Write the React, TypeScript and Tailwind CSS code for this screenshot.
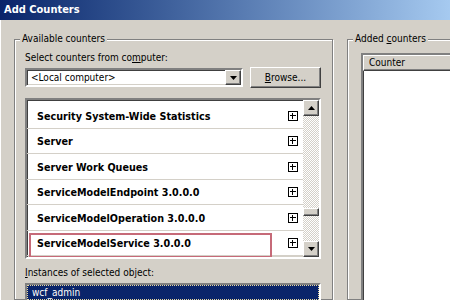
import React from "react";

const rows = [
  { name: "Security System-Wide Statistics", h: "h-[26px]" },
  { name: "Server", h: "h-[25px]" },
  { name: "Server Work Queues", h: "h-[26px]" },
  { name: "ServiceModelEndpoint 3.0.0.0", h: "h-[25px]" },
  { name: "ServiceModelOperation 3.0.0.0", h: "h-[26px]" },
  { name: "ServiceModelService 3.0.0.0", h: "h-[25px]", marked: true },
];

const sunken =
  "border-2 border-t-[#808080] border-l-[#808080] border-b-white border-r-white shadow-[inset_1px_1px_0_#404040,inset_-1px_-1px_0_#d4d0c8]";
const raised =
  "border border-t-[#ffffff] border-l-[#ffffff] border-b-[#404040] border-r-[#404040] shadow-[inset_-1px_-1px_0_#808080]";
const etched =
  "border border-[#808080] shadow-[inset_1px_1px_0_#fff,1px_1px_0_#fff]";

function PlusBox() {
  return (
    <svg width="10" height="10" viewBox="0 0 10 10" className="shrink-0">
      <rect x="0.5" y="0.5" width="9" height="9" fill="#fff" stroke="#000" />
      <path d="M2 4.5h6M4.5 2v6" stroke="#000" />
    </svg>
  );
}

function Arrow({ up }: { up?: boolean }) {
  return (
    <svg width="7" height="4" viewBox="0 0 7 4">
      <path d={up ? "M3.5 0L7 4H0z" : "M0 0h7L3.5 4z"} fill="#000" />
    </svg>
  );
}

export default function App() {
  return (
    <div className="w-[450px] h-[300px] overflow-hidden bg-[#d4d0c8] text-black font-['DejaVu_Sans_Condensed','DejaVu_Sans',sans-serif] text-[10px] leading-[12px]">
      <div className="h-[20px] flex items-center pl-[4px] bg-gradient-to-r from-[#0a246a] to-[#a6caf0] text-white font-bold text-[11px]">
        Add Counters
      </div>

      <div className="flex pt-[13px] pl-[13px] border-l border-white h-[280px]">
        {/* Available counters */}
        <fieldset className={`w-[319px] shrink-0 ${etched}`}>
          <legend className="ml-[5px] px-[2px] bg-[#d4d0c8]">Available counters</legend>
          <div className="pl-[10px]">
            <div className="mt-[7px]">
              Select counters from co<span className="underline">m</span>puter:
            </div>
            <div className="flex items-start mt-[3px]">
              <div className={`mt-[1px] w-[218px] h-[19px] bg-white flex items-center ${sunken}`}>
                <span className="pl-[4px] flex-1">&lt;Local computer&gt;</span>
                <div className={`w-[16px] h-full bg-[#d4d0c8] flex items-center justify-center ${raised}`}>
                  <Arrow />
                </div>
              </div>
              <button className={`ml-[7px] w-[71px] h-[21px] bg-[#d4d0c8] ${raised}`}>
                <span className="underline">B</span>rowse...
              </button>
            </div>

            <div className={`mt-[10px] w-[296px] h-[161px] bg-white flex ${sunken}`}>
              <div className="flex-1 pt-[3px] overflow-hidden">
                {rows.map((r) => (
                  <div
                    key={r.name}
                    className={`relative ${r.h} flex items-center justify-between pl-[10px] pr-[5px] border-b border-[#d4d0c8] font-bold text-[10.7px]`}
                  >
                    <span className="pt-[2px]">{r.name}</span>
                    <PlusBox />
                    {r.marked && (
                      <div className="absolute left-[2px] top-[2px] w-[243px] h-[25px] border-2 border-[#c66a78]" />
                    )}
                  </div>
                ))}
              </div>
              <div className="w-[16px] flex flex-col">
                <div className={`h-[16px] bg-[#d4d0c8] flex items-center justify-center ${raised}`}>
                  <Arrow up />
                </div>
                <div className="flex-1 bg-[repeating-conic-gradient(#ffffff_0%_25%,#d4d0c8_0%_50%)] bg-size-[2px_2px]">
                  <div className={`mt-[92px] h-[8px] bg-[#d4d0c8] ${raised}`} />
                </div>
                <div className={`h-[16px] bg-[#d4d0c8] flex items-center justify-center ${raised}`}>
                  <Arrow />
                </div>
              </div>
            </div>

            <div className="mt-[8px]">
              <span className="underline">I</span>nstances of selected object:
            </div>
            <div className={`mt-[4px] w-[296px] h-[40px] bg-white ${sunken}`}>
              <div className="h-[15px] bg-[#0a246a] text-white flex items-center pl-[4px] border border-dotted border-[#e8d8a0]">
                wcf_admin
              </div>
            </div>
          </div>
        </fieldset>

        {/* Added counters */}
        <fieldset className={`ml-[14px] w-[200px] shrink-0 ${etched}`}>
          <legend className="ml-[5px] px-[2px] bg-[#d4d0c8]">
            Added <span className="underline">c</span>ounters
          </legend>
          <div className="pl-[13px] mt-[8px]">
            <div className={`h-[250px] bg-white ${sunken}`}>
              <div className={`h-[16px] bg-[#d4d0c8] flex items-center pl-[5px] ${raised}`}>
                Counter
              </div>
            </div>
          </div>
        </fieldset>
      </div>
    </div>
  );
}
